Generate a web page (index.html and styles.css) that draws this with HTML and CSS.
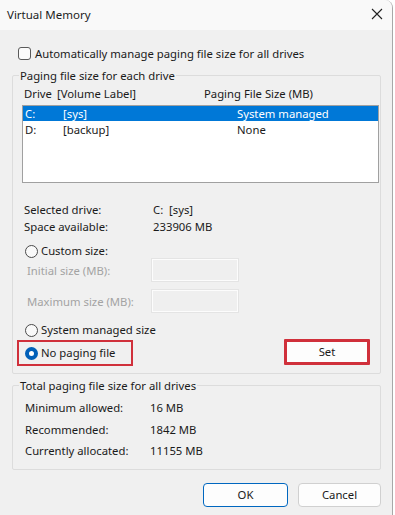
FILE: index.html
```html
<!DOCTYPE html>
<html lang="en">
<head>
    <meta charset="UTF-8">
    <meta name="viewport" content="width=device-width, initial-scale=1.0">
    <title>Virtual Memory</title>
    <link rel="stylesheet" href="styles.css">
</head>
<body>
    <div class="window">
        <div class="titlebar">
            <span class="title">Virtual Memory</span>
            <span class="close">
                <svg width="12" height="12" viewBox="0 0 12 12">
                    <path d="M1 1 L11 11 M11 1 L1 11" stroke="#222" stroke-width="1.1" fill="none"/>
                </svg>
            </span>
        </div>

        <div class="content">
            <div class="check-row">
                <span class="checkbox"></span>
                <span>Automatically manage paging file size for all drives</span>
            </div>

            <fieldset class="group drives">
                <legend>Paging file size for each drive</legend>
                <div class="cols">
                    <span class="col-drive">Drive</span>
                    <span class="col-label">[Volume Label]</span>
                    <span class="col-size">Paging File Size (MB)</span>
                </div>
                <div class="listbox">
                    <div class="list-row selected">
                        <span class="col-drive">C:</span>
                        <span class="col-label">[sys]</span>
                        <span class="col-size">System managed</span>
                    </div>
                    <div class="list-row">
                        <span class="col-drive">D:</span>
                        <span class="col-label">[backup]</span>
                        <span class="col-size">None</span>
                    </div>
                </div>

                <div class="info">
                    <span>Selected drive:</span><span>C:&nbsp;&nbsp;[sys]</span>
                    <span>Space available:</span><span>233906 MB</span>
                </div>

                <div class="radio-row custom">
                    <span class="radio"></span>
                    <span>Custom size:</span>
                </div>
                <div class="size-row first">
                    <span class="size-label">Initial size (MB):</span>
                    <span class="size-input"></span>
                </div>
                <div class="size-row">
                    <span class="size-label">Maximum size (MB):</span>
                    <span class="size-input"></span>
                </div>

                <div class="radio-row system">
                    <span class="radio"></span>
                    <span>System managed size</span>
                </div>

                <div class="last-row">
                    <div class="radio-row marked">
                        <span class="radio checked"></span>
                        <span>No paging file</span>
                    </div>
                    <button class="btn set marked">Set</button>
                </div>
            </fieldset>

            <fieldset class="group totals">
                <legend>Total paging file size for all drives</legend>
                <div class="total-grid">
                    <span>Minimum allowed:</span><span>16 MB</span>
                    <span>Recommended:</span><span>1842 MB</span>
                    <span>Currently allocated:</span><span>11155 MB</span>
                </div>
            </fieldset>

            <div class="actions">
                <button class="btn ok">OK</button>
                <button class="btn cancel">Cancel</button>
            </div>
        </div>
    </div>
</body>
</html>
```

FILE: styles.css
```css
* {
    margin: 0;
    padding: 0;
    box-sizing: border-box;
}

body {
    font-family: 'Segoe UI', 'Noto Sans', 'Open Sans', sans-serif;
    font-size: 11.3px;
    color: #1a1a1a;
    background: #ffffff;
    width: 395px;
    height: 515px;
    overflow: hidden;
}

.window {
    width: 393px;
    height: 515px;
    background: #f0f0f0;
    border-right: 1px solid #a8a8a8;
    border-top-right-radius: 8px;
    overflow: hidden;
}

.titlebar {
    height: 30px;
    background: #f9f9f9;
    display: flex;
    align-items: center;
    justify-content: space-between;
    padding: 0 8px 2px 7px;
}

.title {
    font-size: 11.5px;
    color: #1c1c1c;
}

.close {
    display: flex;
    margin-right: 1px;
}

.content {
    padding: 0 11px 0 12px;
}

.check-row {
    display: flex;
    align-items: center;
    height: 15px;
    margin-top: 16px;
    padding-left: 6px;
    line-height: 15px;
}

.checkbox {
    width: 13px;
    height: 13px;
    border: 1px solid #5a5a5a;
    border-radius: 3px;
    background: #fbfbfb;
    margin-right: 4px;
}

.group {
    border: 1px solid #dcdcdc;
    border-radius: 2px;
    min-width: 0;
}

.group legend {
    line-height: 15px;
    padding: 0 1px;
    color: #1a1a1a;
}

.drives {
    margin-top: 7px;
    padding: 3px 1px 8px 9px;
}

.drives legend {
    margin-left: -3px;
}

.cols {
    display: flex;
    height: 15px;
    line-height: 15px;
    padding-left: 2px;
}

.cols .col-drive {
    width: 33px;
}

.cols .col-label {
    width: 147px;
}

.listbox {
    margin-top: 4px;
    height: 78px;
    background: #ffffff;
    border: 1px solid #a0a0a0;
    padding: 0;
}

.list-row {
    display: flex;
    height: 15px;
    line-height: 15px;
    padding-left: 2px;
}

.list-row .col-drive {
    width: 38px;
}

.list-row .col-label {
    width: 174px;
}

.list-row.selected {
    background: #0078d7;
    color: #ffffff;
}

.list-row + .list-row {
    margin-top: 1px;
}

.info {
    display: grid;
    grid-template-columns: 129px 1fr;
    margin-top: 18px;
    padding-left: 2px;
    line-height: 17px;
}

.radio-row {
    display: flex;
    align-items: center;
    gap: 3px;
    height: 16px;
    line-height: 16px;
    padding-left: 3px;
}

.radio {
    width: 13px;
    height: 13px;
    border: 1px solid #4a4a4a;
    border-radius: 50%;
    background: #f9f9f9;
}

.radio.checked {
    border: 4px solid #005fb8;
    background: #ffffff;
}

.custom {
    margin-top: 8px;
}

.size-row {
    display: flex;
    align-items: center;
    height: 22px;
    color: #a3a3a3;
}

.size-row + .size-row {
    margin-top: 9px;
}

.size-label {
    width: 130px;
    padding-left: 5px;
}

.size-input {
    width: 86px;
    height: 22px;
    background: #efefef;
    border: 1px solid #fcfcfc;
    box-shadow: 0 0 0 1px #e4e4e4;
}

.system {
    margin-top: 10px;
}

.last-row {
    display: flex;
    justify-content: space-between;
    align-items: center;
    margin-top: 1px;
    height: 26px;
    padding-right: 9px;
}

.last-row .radio-row {
    height: 26px;
    width: 116px;
    margin-left: -5px;
    padding-left: 6px;
    margin-top: 2px;
}

.marked {
    border: 2px solid #d0303b;
}

.btn {
    font-family: inherit;
    font-size: 11.3px;
    color: #1a1a1a;
    background: #fdfdfd;
    border: 1px solid #d0d0d0;
    border-radius: 4px;
    height: 24px;
    cursor: pointer;
}

.btn.set {
    width: 86px;
    height: 26px;
    border: 3px solid #d0303b;
    border-radius: 1px;
    margin-top: -1px;
}

.totals {
    margin-top: 4px;
    padding: 4px 0 7px 12px;
}

.totals legend {
    margin-left: -6px;
}

.total-grid {
    display: grid;
    grid-template-columns: 125px 1fr;
    grid-auto-rows: 21.5px;
    align-items: center;
}

.actions {
    display: flex;
    justify-content: flex-end;
    gap: 10px;
    margin-top: 13px;
}

.btn.ok {
    width: 85px;
    border-color: #0067c0;
}

.btn.cancel {
    width: 83px;
}
```
